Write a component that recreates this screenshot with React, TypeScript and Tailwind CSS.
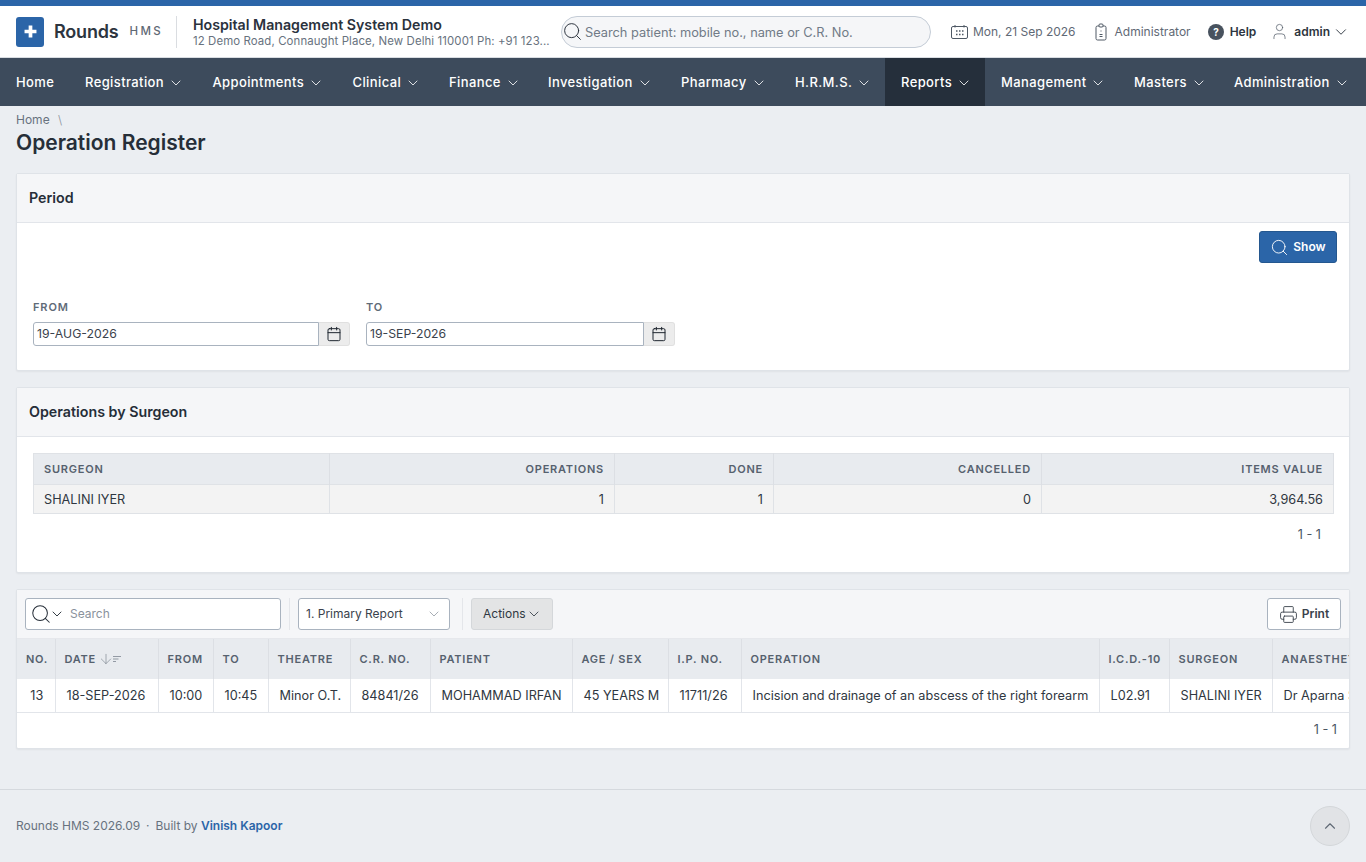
import React from "react";
import { ChevronDown, ChevronUp, Search, Calendar, User, Printer, ArrowDown } from "lucide-react";

const nav = [
  ["Home", false, "w-[69px]"],
  ["Registration", true, "w-[127.5px]"],
  ["Appointments", true, "w-[140px]"],
  ["Clinical", true, "w-[96.5px]"],
  ["Finance", true, "w-[99px]"],
  ["Investigation", true, "w-[133px]"],
  ["Pharmacy", true, "w-[114px]"],
  ["H.R.M.S.", true, "w-[106px]"],
  ["Reports", true, "w-[100px]"],
  ["Management", true, "w-[133px]"],
  ["Masters", true, "w-[100px]"],
  ["Administration", true, "w-[148px]"],
] as const;

const cols = [
  ["NO.", "13", 38],
  ["DATE", "18-SEP-2026", 103],
  ["FROM", "10:00", 55],
  ["TO", "10:45", 55],
  ["THEATRE", "Minor O.T.", 82],
  ["C.R. NO.", "84841/26", 80],
  ["PATIENT", "MOHAMMAD IRFAN", 142],
  ["AGE / SEX", "45 YEARS M", 96],
  ["I.P. NO.", "11711/26", 73],
  ["OPERATION", "Incision and drainage of an abscess of the right forearm", 358],
  ["I.C.D.-10", "L02.91", 70],
  ["SURGEON", "SHALINI IYER", 103],
  ["ANAESTHETIST", "Dr Aparna Sharma", 130],
] as const;

function Card({ title, children, className }: { title: string; children: React.ReactNode; className: string }) {
  return (
    <section className={`bg-white border border-[#dfe3e8] rounded-[2px] shadow-[0_1px_2px_rgba(0,0,0,0.05)] ${className}`}>
      <div className="h-[49px] bg-[#f5f6f8] border-b border-[#e2e5ea] flex items-center px-3 pb-[1px] text-[14.25px] font-semibold text-[#262e38]">{title}</div>
      {children}
    </section>
  );
}

function DateField({ label, value, inputW }: { label: string; value: string; inputW: string }) {
  return (
    <div>
      <div className="text-[11px] leading-[14px] font-semibold tracking-[0.08em] text-[#5f6b78] mb-[8px]">{label}</div>
      <div className="flex h-[24px]">
        <div className={`${inputW} border border-[#a9b3bf] rounded-l-[3px] bg-white pl-[3px] text-[12.25px] leading-[22px] text-[#3a424c]`}>{value}</div>
        <div className="w-[31px] bg-[#ececec] border-y border-r border-[#e0e0e0] rounded-r-[3px] flex items-center justify-center">
          <Calendar size={16} strokeWidth={1.5} className="text-[#1f2630]" />
        </div>
      </div>
    </div>
  );
}

const thCls = "h-[31px] px-[10px] text-[11px] font-semibold tracking-[0.07em] text-[#56616e] border-r border-[#dcdfe4] whitespace-nowrap";

export default function App() {
  return (
    <div className="min-h-[862px] bg-[#ebeef2] flex flex-col font-['Inter',sans-serif] overflow-hidden w-[1366px]">
      <div className="h-[6px] bg-[#2b65a8]" />
      <header className="h-[52px] bg-white border-b border-[#d9dde2] flex items-center pl-4">
        <div className="w-[28px] h-[30px] rounded-[3px] bg-[#2b65a8] flex items-center justify-center shrink-0">
          <svg width="13" height="13" viewBox="0 0 12 12"><path d="M4.3 0.5h3.4v3.8h3.8v3.4H7.700v3.800H4.300V7.700H0.500V4.300h3.800z" fill="#fff" /></svg>
        </div>
        <span className="ml-[10px] text-[18px] font-semibold text-[#2d3540] tracking-[-0.01em]">Rounds</span>
        <span className="ml-[11px] text-[11.500px] font-medium tracking-[0.2em] text-[#5f6975]">HMS</span>
        <div className="ml-[13px] w-px h-[32px] bg-[#dadde1]" />
        <div className="ml-4 w-[368px] shrink-0">
          <div className="text-[14.2px] leading-[18px] mt-[1px] font-semibold text-[#2a323d]">Hospital Management System Demo</div>
          <div className="text-[11.4px] leading-[14px] text-[#68727e] whitespace-nowrap tracking-[0.01em]">12 Demo Road, Connaught Place, New Delhi 110001 Ph: +91 123...</div>
        </div>
        <div className="w-[370px] h-[32px] rounded-full border border-[#c4ccd6] bg-[#f5f6f8] flex items-center shrink-0">
          <Search size={21} strokeWidth={1.1} className="text-[#262e38]" />
          <span className="ml-[2px] pt-[2px] text-[12.8px] text-[#717b87]">Search patient: mobile no., name or C.R. No.</span>
        </div>
        <svg className="ml-5" width="17" height="14" viewBox="0 0 17 14" fill="none" stroke="#4f5965" strokeWidth="1">
          <rect x="0.500" y="1.500" width="16" height="12" rx="1.500" />
          <path d="M4 0v2.500M13 0v2.500" />
          <path d="M5 6h1.500M8 6h1.500M11 6h1.500M5 9.500h1.500M8 9.500h1.500M11 9.500h1.500" strokeWidth="1.300" />
        </svg>
        <span className="ml-[5px] pt-[1px] text-[12px] text-[#5f6975]">Mon, 21 Sep 2026</span>
        <svg className="ml-[17px]" width="16" height="18" viewBox="0 0 16 18" fill="none" stroke="#4f5965" strokeWidth="1">
          <rect x="3" y="3" width="10" height="14" rx="1.500" />
          <rect x="6" y="1" width="4" height="3" rx="1" fill="#fff" />
          <path d="M8 7.500v1M6.500 11.500h3M6.500 13.500h3" />
        </svg>
        <span className="ml-[6px] pt-[1px] text-[12px] text-[#5f6975]">Administrator</span>
        <svg className="ml-[17px]" width="16" height="16" viewBox="0 0 16 16"><circle cx="8" cy="8" r="8" fill="#48525e" /><text x="8" y="11.500" textAnchor="middle" fontSize="10" fontWeight="700" fill="#fff">?</text></svg>
        <span className="ml-[6px] text-[12px] font-semibold text-[#2d3540]">Help</span>
        <User size={19} strokeWidth={0.9} className="ml-[14px] text-[#4f5965]" />
        <span className="ml-[5px] text-[12px] font-semibold text-[#2d3540]">admin</span>
        <ChevronDown size={18} strokeWidth={1.25} className="ml-[2px] text-[#2d3540]" />
      </header>
      <nav className="h-[48px] bg-[#3d4b5c] flex">
        {nav.map(([label, caret, w]) => (
          <div key={label} className={`${w} shrink-0 flex items-center pl-4 pt-[2px] text-[13px] font-medium tracking-[0.03em] text-white ${label === "Reports" ? "bg-[#252f3b]" : ""}`}>
            <span>{label}</span>
            {caret && <ChevronDown size={16} strokeWidth={1.25} className="ml-[4px]" />}
          </div>
        ))}
      </nav>
      <main className="px-4 flex-1">
        <div className="pt-[6px] text-[12px] leading-[16px] text-[#68727e]">Home <span className="ml-[5px] font-light text-[#8a929c]">\</span></div>
        <h1 className="text-[21px] leading-[28px] mt-[1px] font-semibold text-[#262e38]">Operation Register</h1>

        <Card title="Period" className="mt-[16px] h-[198px]">
          <div className="relative h-[148px] px-4">
            <div className="absolute right-[12px] top-[8px] w-[78px] h-[32px] rounded-[3px] bg-[#2b65a8] border border-[#24578f] flex items-center justify-center gap-[4px] text-white text-[12px] font-semibold">
              <Search size={19} strokeWidth={1.15} />Show
            </div>
            <div className="flex gap-4 pt-[77px]">
              <DateField label="FROM" value="19-AUG-2026" inputW="w-[286px]" />
              <DateField label="TO" value="19-SEP-2026" inputW="w-[278px]" />
            </div>
          </div>
        </Card>

        <Card title="Operations by Surgeon" className="mt-[16px] h-[186px]">
          <div className="px-4 pt-4">
            <table className="w-[1300px] table-fixed border-collapse border border-[#dfe2e6]">
              <colgroup><col className="w-[296px]" /><col className="w-[285px]" /><col className="w-[159px]" /><col className="w-[268px]" /><col className="w-[292px]" /></colgroup>
              <thead className="bg-[#e8ebef]">
                <tr>
                  <th className={`${thCls} text-left`}>SURGEON</th>
                  <th className={`${thCls} text-right`}>OPERATIONS</th>
                  <th className={`${thCls} text-right`}>DONE</th>
                  <th className={`${thCls} text-right`}>CANCELLED</th>
                  <th className={`${thCls} text-right`}>ITEMS VALUE</th>
                </tr>
              </thead>
              <tbody className="bg-[#f3f3f3] text-[12.7px] text-[#2f3741]">
                <tr className="h-[29px]">
                  <td className="px-[10px] pt-[2px] border-r border-t border-[#dfe2e6]">SHALINI IYER</td>
                  <td className="px-[10px] pt-[2px] text-right border-r border-t border-[#dfe2e6]">1</td>
                  <td className="px-[10px] pt-[2px] text-right border-r border-t border-[#dfe2e6]">1</td>
                  <td className="px-[10px] pt-[2px] text-right border-r border-t border-[#dfe2e6]">0</td>
                  <td className="px-[10px] pt-[2px] text-right border-t border-[#dfe2e6]">3,964.56</td>
                </tr>
              </tbody>
            </table>
            <div className="text-right pr-[12px] mt-[13px] text-[12.7px] leading-[16px] text-[#4b5561]">1 - 1</div>
          </div>
        </Card>

        <section className="mt-[16px] h-[160px] bg-white border border-[#dfe3e8] rounded-[2px] shadow-[0_1px_2px_rgba(0,0,0,0.05)] overflow-hidden">
          <div className="h-[49px] bg-[#f5f6f8] flex items-center px-2 border-b border-[#e6e8ec]">
            <div className="w-[256px] h-[32px] bg-white border border-[#a9b3bf] rounded-[3px] flex items-center pl-[4px]">
              <Search size={22} strokeWidth={1.1} className="text-[#262e38]" />
              <ChevronDown size={16} strokeWidth={1.4} className="-ml-[3px] text-[#262e38]" />
              <span className="ml-[5px] text-[12px] text-[#8a929c]">Search</span>
            </div>
            <div className="w-px h-[32px] bg-[#e4e6ea] ml-2 mr-[8px]" />
            <div className="w-[152px] h-[32px] bg-white border border-[#a9b3bf] rounded-[3px] flex items-center justify-between pl-[7px] pr-[7px] text-[12px] text-[#3a424c]">
              1. Primary Report
              <ChevronDown size={16} strokeWidth={1} className="text-[#7c8590]" />
            </div>
            <div className="w-px h-[32px] bg-[#e4e6ea] ml-[12px] mr-[8px]" />
            <div className="w-[82px] h-[32px] bg-[#e3e4e5] border border-[#d4d7da] rounded-[3px] flex items-center pl-[11px] text-[12px] text-[#2f3741]">
              Actions<ChevronDown size={16} strokeWidth={1.25} />
            </div>
            <div className="ml-auto w-[74px] h-[32px] bg-white border border-[#a9b3bf] rounded-[3px] flex items-center justify-center gap-[4px] text-[12px] font-semibold text-[#3a424c]">
              <Printer size={19} strokeWidth={1.15} />Print
            </div>
          </div>
          <table className="table-fixed border-collapse w-[1385px]">
            <colgroup>{cols.map((c) => <col key={c[0]} style={{ width: c[2] }} />)}</colgroup>
            <thead className="bg-[#e8ebef]">
              <tr>
                {cols.map((c) => (
                  <th key={c[0]} className="h-[40px] px-[9px] text-left text-[11px] font-semibold tracking-[0.07em] text-[#56616e] border-r border-[#dcdfe4] whitespace-nowrap overflow-hidden">
                    {c[0] === "DATE" ? (
                      <span className="flex items-center">DATE
                        <ArrowDown size={16} strokeWidth={1} className="ml-[2px] text-[#7c8590]" />
                        <svg width="8" height="8" viewBox="0 0 8 8" className="-ml-[1px]"><path d="M0 1.500h8M0 4h5.500M0 6.500h3" stroke="#7c8590" strokeWidth="0.8" fill="none" /></svg>
                      </span>
                    ) : c[0]}
                  </th>
                ))}
              </tr>
            </thead>
            <tbody>
              <tr className="h-[33px] border-b border-[#e2e5ea]">
                {cols.map((c) => (
                  <td key={c[0]} className={`text-[12.7px] text-[#2f3741] border-r border-[#e2e5ea] whitespace-nowrap overflow-hidden ${c[0] === "NO." ? "text-center pl-[2px]" : "pl-[11px] pr-[9px]"}`}>{c[1]}</td>
                ))}
              </tr>
            </tbody>
          </table>
          <div className="text-right pr-[12px] mt-[9px] text-[12.7px] leading-[16px] text-[#4b5561]">1 - 1</div>
        </section>
      </main>
      <footer className="mt-[40px] h-[73px] border-t border-[#d5d9de] flex items-center justify-between pl-4 pr-4 text-[12px] text-[#68727e]">
        <div className="-mt-[1px]">Rounds HMS 2026.09 <span className="mx-[2.500px]">·</span> Built by <span className="font-semibold text-[#2b65a8]">Vinish Kapoor</span></div>
        <div className="w-[40px] h-[40px] rounded-full bg-[#e1e3e6] border border-[#d4d7da] flex items-center justify-center">
          <ChevronUp size={18} strokeWidth={1.5} className="text-[#5f6975]" />
        </div>
      </footer>
    </div>
  );
}
